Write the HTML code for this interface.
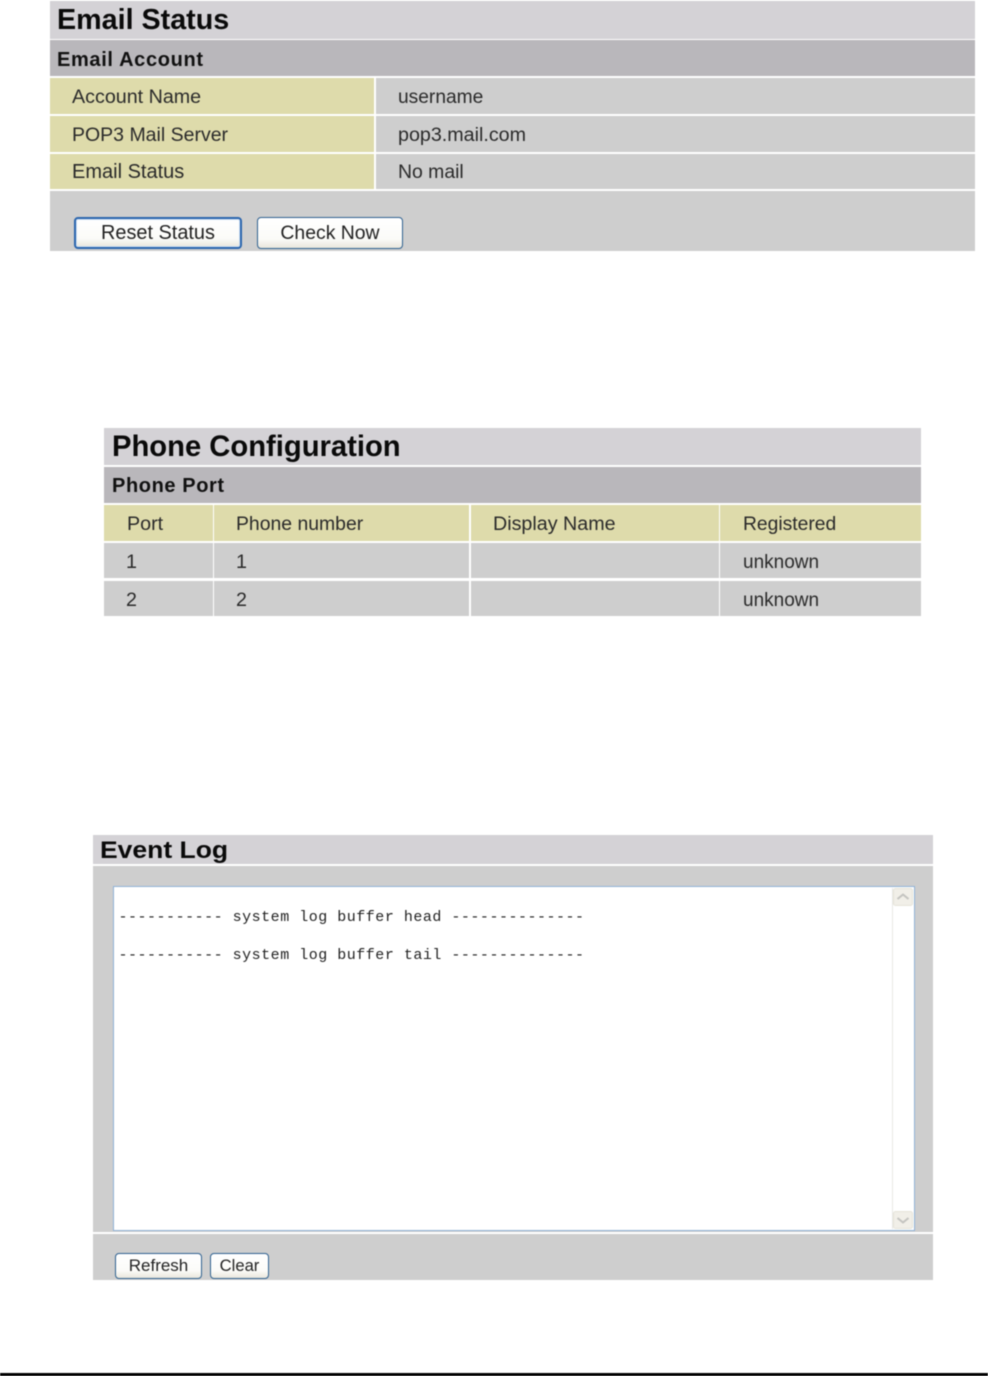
<!DOCTYPE html>
<html>
<head>
<meta charset="utf-8">
<style>
html,body{margin:0;padding:0;background:#fff}
body{width:988px;height:1376px;position:relative;overflow:hidden;font-family:"Liberation Sans",sans-serif;color:#222}
#w{position:absolute;left:0;top:0;width:988px;height:1376px;filter:blur(.4px)}
.b{position:absolute}
.t{position:absolute;white-space:pre;font-size:19.7px;line-height:24px;color:#2a2a2a}
.h1{font-weight:bold;color:#0a0a0a;line-height:34px}
.h2{font-weight:bold;font-size:20px;letter-spacing:.6px;color:#111;line-height:24px}
.ti{background:#d4d2d6}
.su{background:#b9b7bb}
.y{background:#dedbab}
.g{background:#cecece}
.btn{position:absolute;box-sizing:border-box;border:1.5px solid #2f6190;border-radius:4px;background:linear-gradient(#fff 0,#fbfbf8 70%,#e9e6dc 100%);text-align:center;color:#222;white-space:pre}
.def{border:2px solid #2a65ad;box-shadow:inset 0 0 0 1px #cfe0f2}
.log{position:absolute;white-space:pre;font-family:"Liberation Mono",monospace;font-size:15px;letter-spacing:.51px;line-height:20px;color:#222}
</style>
</head>
<body>
<div id="w">
<!-- Email Status -->
<div class="b ti" style="left:50px;top:1px;width:925px;height:38px"></div>
<div class="b su" style="left:50px;top:40px;width:925px;height:36px"></div>
<div class="b y" style="left:50px;top:78px;width:324px;height:36px"></div>
<div class="b g" style="left:376px;top:78px;width:599px;height:36px"></div>
<div class="b y" style="left:50px;top:116px;width:324px;height:36px"></div>
<div class="b g" style="left:376px;top:116px;width:599px;height:36px"></div>
<div class="b y" style="left:50px;top:154px;width:324px;height:35px"></div>
<div class="b g" style="left:376px;top:154px;width:599px;height:35px"></div>
<div class="b g" style="left:50px;top:191px;width:925px;height:60px"></div>
<div class="t h1" style="left:57px;top:3px;font-size:28.7px">Email Status</div>
<div class="t h2" style="left:57px;top:47.5px;letter-spacing:.65px">Email Account</div>
<div class="t" style="left:72px;top:85px">Account Name</div>
<div class="t" style="left:72px;top:123px;font-size:19.5px">POP3 Mail Server</div>
<div class="t" style="left:72px;top:160px;font-size:20px">Email Status</div>
<div class="t" style="left:398px;top:86px;font-size:19.2px">username</div>
<div class="t" style="left:398px;top:123px">pop3.mail.com</div>
<div class="t" style="left:398px;top:160px;font-size:19.4px">No mail</div>
<div class="btn def" style="left:74px;top:217px;width:168px;height:32px;font-size:19.9px;line-height:28px">Reset Status</div>
<div class="btn" style="left:257px;top:217px;width:146px;height:32px;font-size:19.4px;line-height:30px">Check Now</div>

<!-- Phone Configuration -->
<div class="b ti" style="left:104px;top:428px;width:817px;height:37px"></div>
<div class="b su" style="left:104px;top:467px;width:817px;height:36px"></div>
<div class="b y" style="left:104px;top:505px;width:109px;height:36px"></div>
<div class="b y" style="left:214px;top:505px;width:255px;height:36px"></div>
<div class="b y" style="left:471px;top:505px;width:248px;height:36px"></div>
<div class="b y" style="left:720px;top:505px;width:201px;height:36px"></div>
<div class="b g" style="left:104px;top:543px;width:109px;height:35px"></div>
<div class="b g" style="left:214px;top:543px;width:255px;height:35px"></div>
<div class="b g" style="left:471px;top:543px;width:248px;height:35px"></div>
<div class="b g" style="left:720px;top:543px;width:201px;height:35px"></div>
<div class="b g" style="left:104px;top:581px;width:109px;height:35px"></div>
<div class="b g" style="left:214px;top:581px;width:255px;height:35px"></div>
<div class="b g" style="left:471px;top:581px;width:248px;height:35px"></div>
<div class="b g" style="left:720px;top:581px;width:201px;height:35px"></div>
<div class="t h1" style="left:112px;top:430px;font-size:29.2px">Phone Configuration</div>
<div class="t h2" style="left:112px;top:474px;font-size:20px">Phone Port</div>
<div class="t" style="left:127px;top:512px">Port</div>
<div class="t" style="left:236px;top:512px;font-size:19.4px">Phone number</div>
<div class="t" style="left:493px;top:512px">Display Name</div>
<div class="t" style="left:743px;top:513px;font-size:19.3px">Registered</div>
<div class="t" style="left:126px;top:550px">1</div>
<div class="t" style="left:236px;top:550px">1</div>
<div class="t" style="left:743px;top:551px;font-size:19px">unknown</div>
<div class="t" style="left:126px;top:588px">2</div>
<div class="t" style="left:236px;top:588px">2</div>
<div class="t" style="left:743px;top:589px;font-size:19px">unknown</div>

<!-- Event Log -->
<div class="b ti" style="left:93px;top:835px;width:840px;height:29px"></div>
<div class="b g" style="left:93px;top:866px;width:840px;height:366px"></div>
<div class="b g" style="left:93px;top:1234px;width:840px;height:46px"></div>
<div class="t h1" style="left:100px;top:834px;font-size:24px;transform:scaleX(1.104);transform-origin:0 50%">Event Log</div>
<div class="b" style="left:113px;top:886px;width:800px;height:343px;border:1.5px solid #8fb2d6;background:#fff"></div>
<div class="b" style="left:892px;top:888px;width:1px;height:341px;background:#e8e8e4"></div>
<svg class="b" style="left:893px;top:888px" width="20" height="18" viewBox="0 0 20 18"><rect x=".5" y=".5" width="19" height="17" rx="2" fill="#f1efe8" stroke="#e6e4da"/><path d="M4.5 11 L10 6.5 L15.5 11" fill="none" stroke="#c4c4c0" stroke-width="2"/></svg>
<svg class="b" style="left:893px;top:1211px" width="20" height="18" viewBox="0 0 20 18"><rect x=".5" y=".5" width="19" height="17" rx="2" fill="#f1efe8" stroke="#e6e4da"/><path d="M4.5 7 L10 11.5 L15.5 7" fill="none" stroke="#c4c4c0" stroke-width="2"/></svg>
<div class="log" style="left:118.5px;top:908px">----------- system log buffer head --------------</div>
<div class="log" style="left:118.5px;top:946px">----------- system log buffer tail --------------</div>
<div class="btn" style="left:115px;top:1253px;width:87px;height:26px;font-size:17px;line-height:23px">Refresh</div>
<div class="btn" style="left:210px;top:1253px;width:59px;height:26px;font-size:16.6px;line-height:23px">Clear</div>

<div class="b" style="left:0;top:1373px;width:988px;height:3px;background:#000"></div>
</div>
</body>
</html>
